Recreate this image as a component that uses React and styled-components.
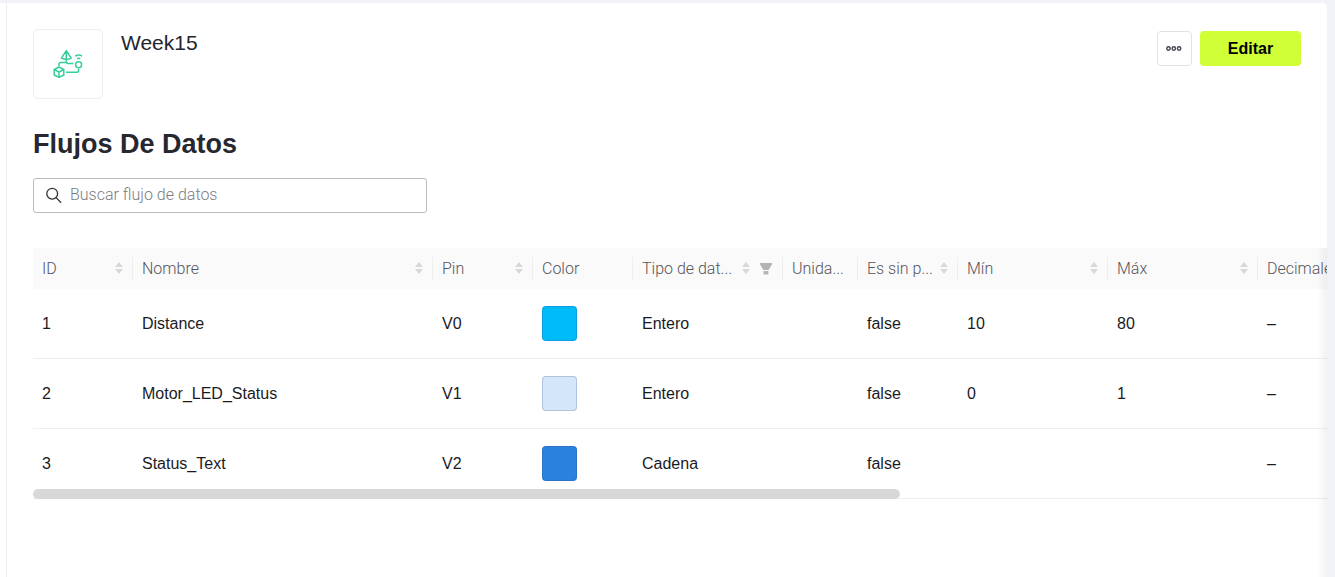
import React, { useState } from 'react';
import styled, { createGlobalStyle } from 'styled-components';

const columns = [
  { title: 'ID', width: 100, sortable: true },
  { title: 'Nombre', width: 300, sortable: true },
  { title: 'Pin', width: 100, sortable: true },
  { title: 'Color', width: 100 },
  { title: 'Tipo de dat...', width: 150, sortable: true, filterable: true },
  { title: 'Unida...', width: 75 },
  { title: 'Es sin p...', width: 100, sortable: true },
  { title: 'Mín', width: 150, sortable: true },
  { title: 'Máx', width: 150, sortable: true },
  { title: 'Decimales', width: 704 },
];

const datastreams = [
  { id: 1, name: 'Distance', pin: 'V0', color: '#00bbfa', type: 'Entero', raw: 'false', min: '10', max: '80' },
  { id: 2, name: 'Motor_LED_Status', pin: 'V1', color: '#d4e7f9', type: 'Entero', raw: 'false', min: '0', max: '1' },
  { id: 3, name: 'Status_Text', pin: 'V2', color: '#2b81de', type: 'Cadena', raw: 'false', min: '', max: '' },
];

const TemplateIcon = () => (
  <svg width="30" height="30" viewBox="0 0 30 30" fill="none" stroke="#35cf9b" strokeWidth="1.5" strokeLinejoin="round" aria-hidden="true">
    <path d="M13.3 1.6 8.4 9.2Q13.3 11.6 18.2 9.2ZM13.3 1.6V12.6Q13.3 14.4 15 14.4H20.5" />
    <path d="M6 17V15.2Q6 13.4 7.8 13.4H13.3" />
    <path d="M22.3 7.2Q25.6 4.7 28.9 7.2M24 9.9Q25.6 8.8 27.2 9.9" />
    <circle cx="25.6" cy="15.8" r="3" />
    <path d="M13 23.3H24.2Q25.6 23.3 25.6 21.8V19.8" />
    <path d="M6 18 10.8 20.5V26L6 28.4 1.2 26V20.5ZM1.2 20.5 6 23 10.8 20.5M6 23V28.4" />
  </svg>
);

const SearchIcon = () => (
  <svg width="16" height="17" viewBox="0 0 16 17" fill="none" stroke="#33343b" strokeWidth="1.3" aria-hidden="true">
    <circle cx="6.2" cy="6.7" r="5.4" />
    <path d="m10.1 10.6 5 5.2" />
  </svg>
);

const MoreIcon = () => (
  <svg width="17" height="8" viewBox="0 0 17 8" fill="none" stroke="#44454e" strokeWidth="1.4" aria-hidden="true">
    <circle cx="2.5" cy="3.5" r="1.7" />
    <circle cx="7.8" cy="3.5" r="1.7" />
    <circle cx="13.1" cy="3.5" r="1.7" />
  </svg>
);

const SortIcon = () => (
  <svg width="8" height="14" viewBox="0 0 8 14" fill="#d8d8d8" aria-hidden="true">
    <path d="M4 0 8 5H0ZM0 7H8L4 12Z" />
  </svg>
);

const FilterIcon = () => (
  <svg width="13" height="12" viewBox="0 0 13 12" fill="#b3b3b3" aria-hidden="true">
    <path d="M0 0H12V1.2L8.6 7H3.4L0 1.2ZM3.6 8H8.4V11.5H3.6Z" />
  </svg>
);

const App = () => {
  const [scroll, setScroll] = useState(0);

  const onScroll = (e) => {
    setScroll(e.target.scrollLeft / e.target.scrollWidth);
  };

  return (
    <Page>
      <GlobalStyle />
      <Content>
        <Header>
          <Logo>
            <TemplateIcon />
          </Logo>
          <Name>Week15</Name>
          <Actions>
            <MoreButton type="button" aria-label="Más">
              <MoreIcon />
            </MoreButton>
            <EditButton type="button">Editar</EditButton>
          </Actions>
        </Header>
        <Title>Flujos De Datos</Title>
        <Search>
          <SearchIcon />
          <SearchInput type="text" aria-label="Buscar flujo de datos" placeholder="Buscar flujo de datos" />
        </Search>
        <TableArea>
          <TableFrame>
            <Scroller onScroll={onScroll}>
              <Table>
                <colgroup>
                  {columns.map((c) => (
                    <Col key={c.title} $width={c.width} />
                  ))}
                </colgroup>
                <thead>
                  <tr>
                    {columns.map((c) => (
                      <Th key={c.title} scope="col">
                        <HeadCell>
                          <HeadLabel>{c.title}</HeadLabel>
                          {c.sortable && <SortIcon />}
                          {c.filterable && <FilterIcon />}
                        </HeadCell>
                      </Th>
                    ))}
                  </tr>
                </thead>
                <tbody>
                  {datastreams.map((d) => (
                    <tr key={d.id}>
                      <Td>{d.id}</Td>
                      <Td>{d.name}</Td>
                      <Td>{d.pin}</Td>
                      <Td>
                        <Swatch $color={d.color} />
                      </Td>
                      <Td>{d.type}</Td>
                      <Td />
                      <Td>{d.raw}</Td>
                      <Td>{d.min}</Td>
                      <Td>{d.max}</Td>
                      <Td>–</Td>
                    </tr>
                  ))}
                </tbody>
              </Table>
            </Scroller>
            <ScrollThumb style={{ marginLeft: `${scroll * 100}%` }} />
          </TableFrame>
        </TableArea>
      </Content>
    </Page>
  );
};

export default App;

const GlobalStyle = createGlobalStyle`
  * {
    box-sizing: border-box;
  }

  body {
    margin: 0;
    background: #fff;
    color: #1b1b1f;
    font-family: 'Liberation Sans', Arial, sans-serif;
    font-size: 16px;
    line-height: 24px;
  }

  button,
  input {
    font: inherit;
  }
`;

const Page = styled.div`
  display: flex;
  min-height: 100vh;
  padding: 0 8px 0 6px;
  border-top: 3px solid #f2f3f8;
  background: linear-gradient(to right, #fff 6px, #f2f3f8 6px);
`;

const Content = styled.main`
  display: flex;
  flex-direction: column;
  flex: 1;
  min-width: 0;
  padding: 26px 0 0 26px;
  border-left: 1px solid #ededf0;
  border-top-right-radius: 5px;
  background: #fff;
`;

const Header = styled.header`
  display: flex;
  align-items: flex-start;
  gap: 18px;
  padding-right: 26px;
`;

const Logo = styled.div`
  display: flex;
  align-items: center;
  justify-content: center;
  width: 70px;
  height: 70px;
  border: 1px solid #ededed;
  border-radius: 5px;
`;

const Name = styled.div`
  flex: 1;
  font-size: 21px;
  line-height: 28px;
  color: #24252c;
`;

const Actions = styled.div`
  display: flex;
  gap: 8px;
  padding-top: 2px;
`;

const MoreButton = styled.button`
  display: flex;
  align-items: center;
  justify-content: center;
  width: 35px;
  height: 35px;
  padding: 0;
  border: 1px solid #e2e2e4;
  border-radius: 4px;
  background: #fff;
`;

const EditButton = styled.button`
  width: 101px;
  height: 35px;
  padding: 0;
  border: 0;
  border-radius: 4px;
  background: #d0ff37;
  color: #000;
  font-size: 16px;
  font-weight: 700;
`;

const Title = styled.h1`
  margin: 29px 0 0;
  font-size: 27px;
  line-height: 32px;
  font-weight: 700;
  color: #27272f;
`;

const Search = styled.label`
  display: flex;
  align-items: center;
  gap: 8px;
  width: 394px;
  max-width: 100%;
  height: 35px;
  margin-top: 18px;
  padding: 0 12px;
  border: 1px solid #bbbbbe;
  border-radius: 3px;
`;

const SearchInput = styled.input`
  flex: 1;
  min-width: 0;
  padding: 0 0 2px;
  border: 0;
  outline: 0;
  background: none;
  font-family: Roboto, 'Liberation Sans', sans-serif;
  font-weight: 300;

  &::placeholder {
    color: #7c7c80;
    opacity: 1;
  }
`;

const TableArea = styled.section`
  position: relative;
  flex: 1;
  margin-top: 35px;

  &::after {
    content: '';
    position: absolute;
    top: 0;
    right: 0;
    bottom: 0;
    width: 10px;
    background: linear-gradient(to right, rgba(0, 0, 0, 0), rgba(0, 0, 0, 0.05));
    pointer-events: none;
  }
`;

const TableFrame = styled.div`
  position: relative;
`;

const Scroller = styled.div`
  overflow-x: auto;
  scrollbar-width: none;
`;

const ScrollThumb = styled.div`
  position: absolute;
  left: 0;
  bottom: 0;
  width: 67%;
  height: 10px;
  border-radius: 5px;
  background: #d8d8d8;
`;

const Table = styled.table`
  width: 1929px;
  table-layout: fixed;
  border-collapse: separate;
  border-spacing: 0;
`;

const Col = styled.col`
  width: ${({ $width }) => $width}px;
`;

const Th = styled.th`
  height: 41px;
  padding: 0;
  background: #fafafa;
  color: #55555b;
  font-family: Roboto, 'Liberation Sans', sans-serif;
  font-weight: 300;
  text-align: left;
`;

const HeadCell = styled.div`
  display: flex;
  align-items: center;
  height: 24px;
  padding: 0 9px;
  border-right: 1px solid #eeeeee;

  svg {
    flex: none;
  }

  svg + svg {
    margin-left: 10px;
  }
`;

const HeadLabel = styled.span`
  flex: 1;
  white-space: nowrap;
`;

const Td = styled.td`
  height: 70px;
  padding: 0 9px;
  border-bottom: 1px solid #eeeeee;
  vertical-align: middle;
`;

const Swatch = styled.div`
  width: 35px;
  height: 35px;
  border: 1px solid rgba(40, 70, 120, 0.22);
  border-radius: 4px;
  background: ${({ $color }) => $color};
`;
